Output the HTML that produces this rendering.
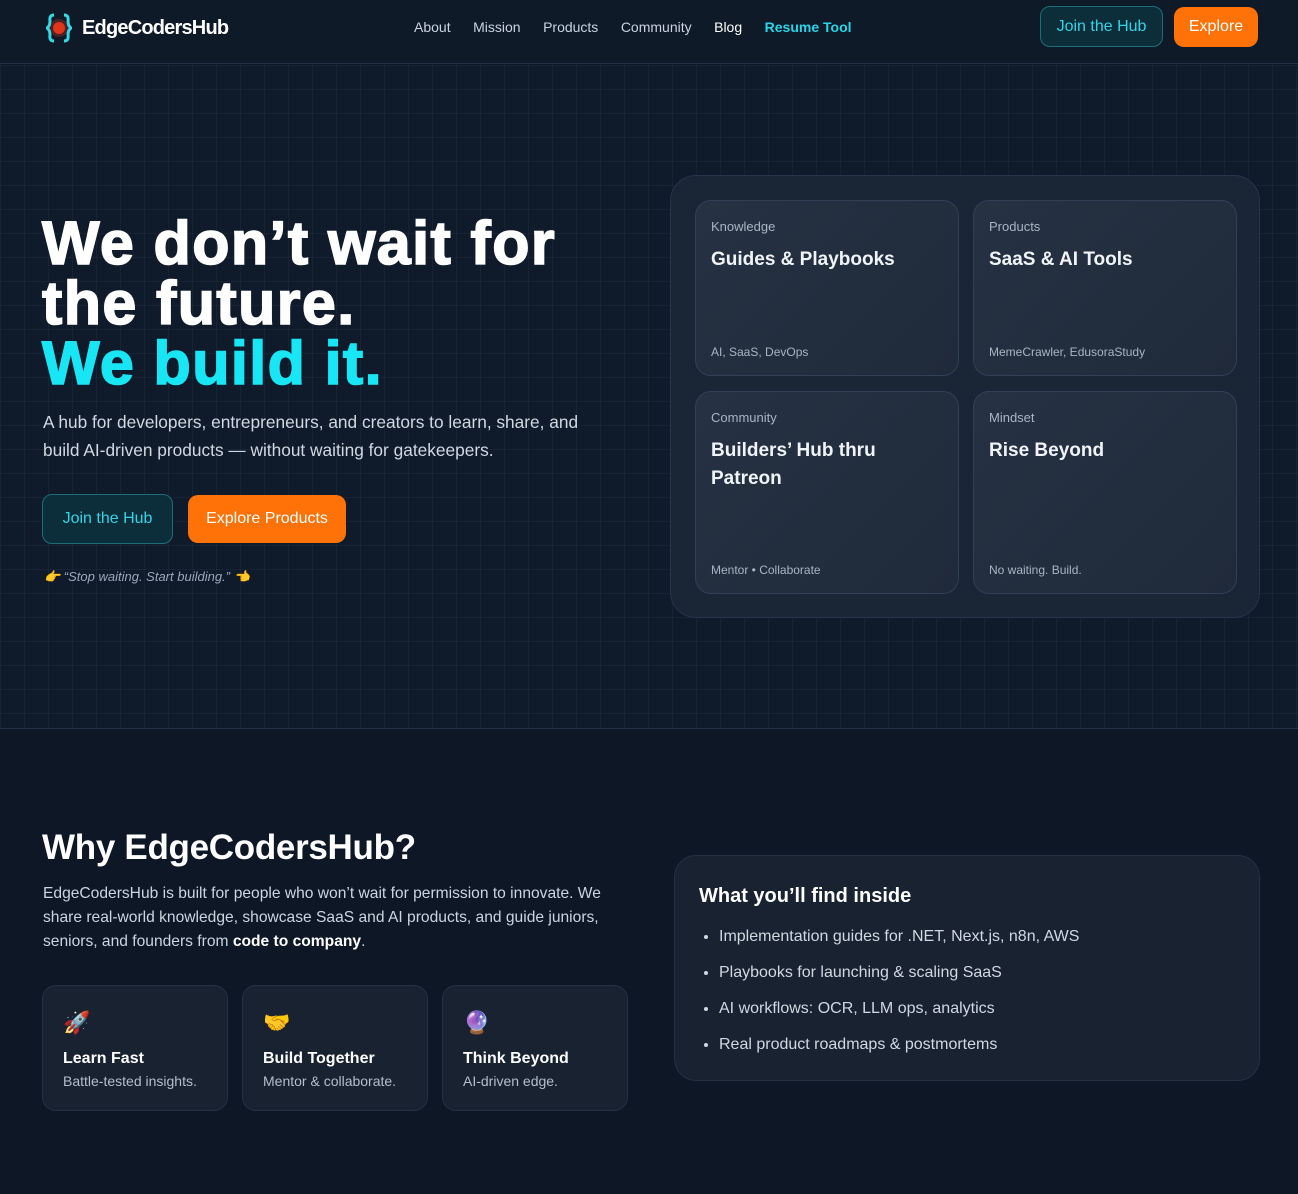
<!DOCTYPE html><html><head><meta charset="utf-8"><style>
*{box-sizing:border-box;margin:0;padding:0}
body{width:1298px;height:1194px;background:#0d1726;font-family:"Liberation Sans",sans-serif;color:#e6edf5;overflow:hidden;position:relative}
.nav{height:64px;border-bottom:1px solid #233044;background:#0f1a29;position:relative}
.logo{position:absolute;left:46px;top:12px;display:flex;align-items:center}
.logo .t{font-weight:700;font-size:20px;color:#fff;margin-left:10px;letter-spacing:-.8px}
.links{position:absolute;left:414px;top:19px;font-size:14px;color:#c9d3df}
.links span{margin-right:22.5px}
.btn{position:absolute;border-radius:10px;display:flex;align-items:center;justify-content:center;font-size:16px}
.ghost{background:#0c2e3b;border:1px solid #1d6d78;color:#35d3e6}
.or{background:#ff7207;color:#fff}
.hero{position:absolute;top:65px;left:0;width:1298px;height:664px;border-bottom:1px solid #243247;
background-color:#0f1a2b;background-image:linear-gradient(rgba(255,255,255,.035) 1px,transparent 1px),linear-gradient(90deg,rgba(255,255,255,.035) 1px,transparent 1px);background-size:24px 24px}
h1{position:absolute;left:42px;top:148px;font-size:61px;line-height:60px;font-weight:900;letter-spacing:1.4px;color:#fff;-webkit-text-stroke:1.6px #fff}
h1 .c{color:#18e6f5;-webkit-text-stroke:1.6px #18e6f5}
.sub{position:absolute;left:43px;top:343px;font-size:17.3px;line-height:28px;color:#d0d8e2;width:570px}
.quote{position:absolute;left:44px;top:504px;font-size:13px;color:#9ba8b8;font-style:italic}
.panel{position:absolute;left:670px;top:110px;width:590px;height:443px;border-radius:26px;background:#1a2535;border:1px solid #273449}
.card{position:absolute;width:264px;border-radius:16px;background:linear-gradient(135deg,#263243,#1f2a3a);border:1px solid #324055}
.card .k{position:absolute;left:15px;top:18px;font-size:13px;color:#aab4c2}
.card .h{position:absolute;left:15px;top:45px;font-size:19px;font-weight:700;color:#f0f4f8;line-height:28px}
.card .f{position:absolute;left:15px;bottom:16px;font-size:12px;color:#aab4c2}
h2{position:absolute;left:42px;top:828px;font-size:35px;font-weight:700;color:#fff;letter-spacing:-.3px}
.p2{position:absolute;left:43px;top:882px;width:590px;font-size:15.6px;line-height:24px;color:#ccd5df}
.f3{position:absolute;top:985px;width:186px;height:126px;border-radius:14px;background:#182230;border:1px solid #253244}
.f3 .e{position:absolute;left:20px;top:24px;font-size:22px}
.f3 .h{position:absolute;left:20px;top:64px;font-size:16px;font-weight:700;color:#fff}
.f3 .s{position:absolute;left:20px;top:87px;font-size:14px;color:#b4bfcb}
.inside{position:absolute;left:674px;top:855px;width:586px;height:226px;border-radius:22px;background:#182230;border:1px solid #253244}
.inside h3{position:absolute;left:24px;top:29px;font-size:20px;font-weight:700;color:#fff}
.inside ul{position:absolute;left:44px;top:63px;font-size:16px;color:#d0d8e2;line-height:36px}
</style></head><body>
<div class="nav">
<div class="logo"><svg width="26" height="32" viewBox="0 0 26 32"><circle cx="13" cy="16" r="6" fill="#e0341c"/><circle cx="13" cy="16" r="9" fill="#e0341c" opacity=".3"/><path d="M8 3Q3 3 4 9Q4 14 1 16Q4 18 4 23Q3 29 8 29" stroke="#37d7e6" stroke-width="3" fill="none"/><path d="M18 3Q23 3 22 9Q22 14 25 16Q22 18 22 23Q23 29 18 29" stroke="#37d7e6" stroke-width="3" fill="none"/></svg><span class="t">EdgeCodersHub</span></div>
<div class="links"><span>About</span><span>Mission</span><span>Products</span><span>Community</span><span style="color:#fff">Blog</span><span style="color:#26d6ea;font-weight:700">Resume Tool</span></div>
<div class="btn ghost" style="left:1040px;top:6px;width:123px;height:41px">Join the Hub</div>
<div class="btn or" style="left:1174px;top:7px;width:84px;height:40px">Explore</div>
</div>
<div class="hero">
<h1>We don’t wait for<br>the future.<br><span class="c">We build it.</span></h1>
<div class="sub">A hub for developers, entrepreneurs, and creators to learn, share, and build AI-driven products — without waiting for gatekeepers.</div>
<div class="btn ghost" style="left:42px;top:429px;width:131px;height:50px">Join the Hub</div>
<div class="btn or" style="left:188px;top:430px;width:158px;height:48px">Explore Products</div>
<div class="quote">👉 “Stop waiting. Start building.” 👈</div>
<div class="panel">
<div class="card" style="left:24px;top:24px;height:176px"><div class="k">Knowledge</div><div class="h">Guides &amp; Playbooks</div><div class="f">AI, SaaS, DevOps</div></div>
<div class="card" style="left:302px;top:24px;height:176px"><div class="k">Products</div><div class="h">SaaS &amp; AI Tools</div><div class="f">MemeCrawler, EdusoraStudy</div></div>
<div class="card" style="left:24px;top:215px;height:203px"><div class="k">Community</div><div class="h">Builders’ Hub thru<br>Patreon</div><div class="f">Mentor • Collaborate</div></div>
<div class="card" style="left:302px;top:215px;height:203px"><div class="k">Mindset</div><div class="h">Rise Beyond</div><div class="f">No waiting. Build.</div></div>
</div>
</div>
<h2>Why EdgeCodersHub?</h2>
<div class="p2">EdgeCodersHub is built for people who won’t wait for permission to innovate. We share real-world knowledge, showcase SaaS and AI products, and guide juniors, seniors, and founders from <b style="color:#fff">code to company</b>.</div>
<div class="f3" style="left:42px"><div class="e">🚀</div><div class="h">Learn Fast</div><div class="s">Battle-tested insights.</div></div>
<div class="f3" style="left:242px"><div class="e">🤝</div><div class="h">Build Together</div><div class="s">Mentor &amp; collaborate.</div></div>
<div class="f3" style="left:442px"><div class="e">🔮</div><div class="h">Think Beyond</div><div class="s">AI-driven edge.</div></div>
<div class="inside"><h3>What you’ll find inside</h3><ul>
<li>Implementation guides for .NET, Next.js, n8n, AWS</li>
<li>Playbooks for launching &amp; scaling SaaS</li>
<li>AI workflows: OCR, LLM ops, analytics</li>
<li>Real product roadmaps &amp; postmortems</li></ul></div>
</body></html>
